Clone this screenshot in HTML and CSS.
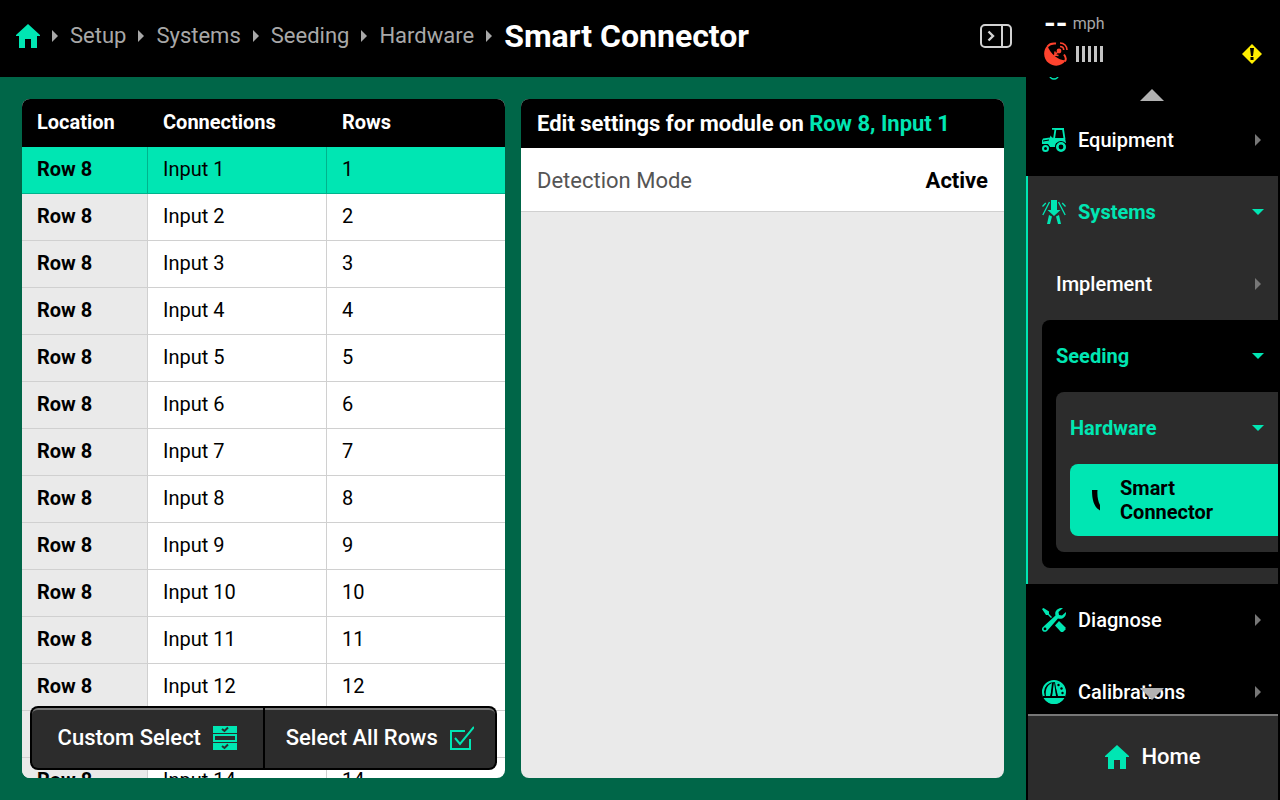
FILE: index.html
```html
<!DOCTYPE html>
<html lang="en">
<head>
<meta charset="utf-8">
<title>Smart Connector</title>
<link rel="stylesheet" href="styles.css">
</head>
<body>
<svg class="defs" aria-hidden="true">
  <symbol id="home" viewBox="0 0 24 24"><path d="M12 0 24 11v1h-3v12h-6v-9H9v9H3V12H0v-1z"/></symbol>
  <symbol id="right" viewBox="0 0 6 12"><path d="M0 0 6 6 0 12z"/></symbol>
  <symbol id="down" viewBox="0 0 12 6"><path d="M0 0h12L6 6z"/></symbol>
</svg>
<main class="main">
  <header class="topbar">
    <nav class="crumbs" aria-label="Breadcrumb">
      <a class="crumb-home" href="#" aria-label="Home"><svg class="icon"><use href="#home"/></svg></a>
      <svg class="sep"><use href="#right"/></svg>
      <a href="#">Setup</a>
      <svg class="sep"><use href="#right"/></svg>
      <a href="#">Systems</a>
      <svg class="sep"><use href="#right"/></svg>
      <a href="#">Seeding</a>
      <svg class="sep"><use href="#right"/></svg>
      <a href="#">Hardware</a>
      <svg class="sep"><use href="#right"/></svg>
      <h1>Smart Connector</h1>
    </nav>
    <button class="collapse" aria-label="Collapse sidebar">
      <svg width="32" height="24" viewBox="0 0 32 24" fill="none" stroke="currentColor" stroke-width="2"><rect x="1" y="1" width="30" height="22" rx="4"/><path d="M22 1v22"/><path stroke-width="2.400" d="M8.500 7.500 13 12l-4.500 4.500"/></svg>
    </button>
  </header>
  <div class="content">
    <section class="panel">
      <table class="modules">
        <thead><tr><th>Location</th><th>Connections</th><th>Rows</th></tr></thead>
        <tbody>
          <tr class="selected"><th>Row 8</th><td>Input 1</td><td>1</td></tr>
          <tr><th>Row 8</th><td>Input 2</td><td>2</td></tr>
          <tr><th>Row 8</th><td>Input 3</td><td>3</td></tr>
          <tr><th>Row 8</th><td>Input 4</td><td>4</td></tr>
          <tr><th>Row 8</th><td>Input 5</td><td>5</td></tr>
          <tr><th>Row 8</th><td>Input 6</td><td>6</td></tr>
          <tr><th>Row 8</th><td>Input 7</td><td>7</td></tr>
          <tr><th>Row 8</th><td>Input 8</td><td>8</td></tr>
          <tr><th>Row 8</th><td>Input 9</td><td>9</td></tr>
          <tr><th>Row 8</th><td>Input 10</td><td>10</td></tr>
          <tr><th>Row 8</th><td>Input 11</td><td>11</td></tr>
          <tr><th>Row 8</th><td>Input 12</td><td>12</td></tr>
          <tr><th>Row 8</th><td>Input 13</td><td>13</td></tr>
          <tr><th>Row 8</th><td>Input 14</td><td>14</td></tr>
        </tbody>
      </table>
      <div class="actions">
        <button>Custom Select
          <svg class="icon" viewBox="0 0 24 24"><path d="M0 0h24v7H0zM0 17h24v7H0z"/><path fill-rule="evenodd" d="M0 8h24v8H0zM2 10v4h20v-4z"/><path class="tick" d="m9 3 2.500 2L15 1.500M9 20l2.500 2 3.500-3.500"/></svg>
        </button>
        <button>Select All Rows
          <svg class="icon line" viewBox="0 0 24 24"><path d="M15 5H1v18h19V13"/><path d="m5 12 5 6L24 1"/></svg>
        </button>
      </div>
    </section>
    <section class="panel">
      <h2>Edit settings for module on <span>Row 8, Input 1</span></h2>
      <button class="setting">Detection Mode <strong>Active</strong></button>
    </section>
  </div>
</main>
<aside class="sidebar">
  <div class="status">
    <div class="speed"><b>--</b> mph</div>
    <div class="signals">
      <svg class="icon dish" viewBox="0 0 24 24"><path d="M3.500 3.500C-1.500 8.500-.8 17 5 21.300c5.500 4 13.500 2.700 16.500-2.800C14 18 6 12 3.500 3.500z"/><path class="arc" d="M3.500 4.500C5.500 1.800 9 1.200 12 1.600M20 12.500c2 2.500 2.500 4.500 1 7"/><path class="arm" d="M8 15.500 15 9M11 9.500v3.500l3.500.5"/><circle cx="15" cy="9" r="2.400"/><path class="arc thin" d="M16 4.500c2.200 0 3.700 1.500 3.700 3.500M16 1c4.200 0 7 3 7 7"/></svg>
      <svg class="bars" width="28" height="16" viewBox="0 0 28 16"><path d="M1.500 0v16M7.500 0v16M13.500 0v16M19.500 0v16M25.500 0v16"/></svg>
      <svg class="alert" width="20" height="20" viewBox="0 0 20 20"><path fill="#fe0" d="M10 0 20 10 10 20 0 10z"/><path d="M8 4h4l-1 8H9zM8.500 13h3v3h-3z"/></svg>
    </div>
  </div>
  <div class="nav-wrap">
    <svg class="scroll-hint up" viewBox="0 0 24 12"><path d="M0 12h24L12 0z"/></svg>
    <nav class="nav" aria-label="Main">
      <div class="item" aria-hidden="true"><svg class="icon" viewBox="0 0 24 24" fill="none" stroke="currentColor" stroke-width="1.500"><circle cx="12" cy="18.500" r="4.500"/></svg></div>
      <a class="item" href="#">
        <svg class="icon" viewBox="0 0 24 24"><path d="M0 12.500 1 10.500l7-1 .5-2 1.500 2 2 .5h11l1 5H14l-1 4H8l-2-3H0z"/><path class="cab" d="M12 11 13.500 1H21l1.500 10M10 .9h12"/><circle cx="3.500" cy="20.500" r="4.500" fill="#000"/><circle cx="19" cy="19" r="6" fill="#000"/><circle class="wheel" cx="3.500" cy="20.500" r="2.500"/><circle class="wheel big" cx="19" cy="19" r="3.700"/><path fill="#000" d="m1 12.500 6-1v1l-6 1z"/></svg>
        Equipment<svg class="chev"><use href="#right"/></svg></a>
      <div class="group">
        <a class="item open" href="#">
          <svg class="icon" viewBox="0 0 24 24"><path d="M9 0h6v10h3.500L12 16 5.500 10H9z"/><path d="m7 15 3 1.500L8 24H5zM17 15l-3 1.500 2 7.500h3z"/><path class="spray" d="M7.500 2 .8 15M3.800 3 .5 6.500M16.500 2l6.700 13M20.200 3l3.300 3.500"/></svg>
          Systems<svg class="chev"><use href="#down"/></svg></a>
        <a class="item sub" href="#">Implement<svg class="chev"><use href="#right"/></svg></a>
        <div class="nest">
          <a class="item open" href="#">Seeding<svg class="chev"><use href="#down"/></svg></a>
          <div class="nest gray">
            <a class="item open" href="#">Hardware<svg class="chev"><use href="#down"/></svg></a>
            <a class="item current" href="#"><svg class="icon" viewBox="0 0 24 24"><path d="M8 2h5.500c-.5 6 .5 11 2.500 15v5.500C10 19 8 12 8 2z"/></svg>Smart Connector</a>
          </div>
        </div>
      </div>
      <a class="item" href="#">
        <svg class="icon" viewBox="0 0 24 24"><path d="m0 1 1.500-1L7 3.500V6l3 3-1 1-3-3H4z"/><path d="m17 13 6.500 6.500v2L21 24h-2l-6-6.500z"/><path fill-rule="evenodd" d="M21 0c-4-.7-9 2.500-7.500 7.500L1 19c-3 3 1 6.500 4 4l11-12.500c4.500 1.500 8.500-2 8-6.500l-4 3.500-3-.5L16.500 4zM3 19.500a1.400 1.400 0 1 1 0 2.800 1.400 1.400 0 0 1 0-2.800z"/></svg>
        Diagnose<svg class="chev"><use href="#right"/></svg></a>
      <a class="item" href="#">
        <svg class="icon" viewBox="0 0 24 24"><circle cx="12" cy="12" r="11" fill="none" stroke="currentColor" stroke-width="2"/><path d="M4 16C3 10 5 5 10 3L8.500 16zM13 2c6 0 10 5 10 10l-.5 4H15z"/><path d="M12 2 10 16h4zM2 18h20c-4.500 8-15.500 8-20 0z"/><path fill="#000" d="M1 16h22v2H1zM11.300 2 8.300 16H10zM13 4l1.200 12h1.800z"/><g fill="#000"><circle cx="16.500" cy="5" r="1.200"/><circle cx="19.500" cy="8.500" r="1.200"/><circle cx="20.500" cy="13" r="1.200"/></g></svg>
        Calibrations<svg class="chev"><use href="#right"/></svg></a>
    </nav>
    <svg class="scroll-hint bottom" viewBox="0 0 24 12"><path d="M0 0h24L12 12z"/></svg>
  </div>
  <a class="home" href="#"><svg class="icon"><use href="#home"/></svg>Home</a>
</aside>
</body>
</html>
```

FILE: styles.css
```css
:root {
  --accent: #00e6b3;
  --dark: #2c2c2c;
  --green: #006648;
}
* { box-sizing: border-box; }
body {
  margin: 0;
  height: 100vh;
  display: grid;
  grid-template-columns: minmax(0, 1fr) 254px;
  overflow: hidden;
  background: #000;
  color: #fff;
  font: 400 20px/24px Roboto, sans-serif;
}
a { color: inherit; text-decoration: none; }
button { font: inherit; border: 0; margin: 0; cursor: pointer; }
svg { flex: none; fill: currentColor; }
svg[fill="none"] { fill: none; }
.defs { position: absolute; width: 0; height: 0; }
.icon { width: 24px; height: 24px; color: var(--accent); }

.main { display: flex; flex-direction: column; min-height: 0; background: var(--green); }
.topbar {
  flex: none;
  display: flex;
  align-items: center;
  justify-content: space-between;
  height: 77px;
  padding: 0 14px 6px 16px;
  background: #000;
}
.crumbs { display: flex; align-items: center; gap: 12px; color: #a8a8a8; font-size: 22px; }
.crumb-home { display: flex; }
.sep { width: 6px; height: 12px; }
h1 { margin: 0; color: #fff; font-size: 32px; line-height: 38px; font-weight: 700; }
.collapse { display: flex; padding: 0; background: none; color: #d2d2d2; }

.content {
  flex: 1;
  min-height: 0;
  display: grid;
  grid-template-columns: 1fr 1fr;
  gap: 16px;
  padding: 22px;
}
.panel {
  position: relative;
  min-height: 0;
  overflow: hidden;
  border-radius: 8px;
  background: #eaeaea;
  color: #000;
}
.modules { width: 100%; table-layout: fixed; border-spacing: 0; background: #fff; }
.modules th, .modules td {
  height: 47px;
  padding: 0 0 2px 15px;
  text-align: left;
  border-bottom: 1px solid #d0d0d0;
}
.modules th { font-weight: 700; }
.modules th:first-child { width: 126px; }
.modules th:nth-child(2) { width: 179px; }
.modules thead th { height: 48px; border: 0; background: #000; color: #fff; }
.modules tbody th { background: #eaeaea; }
.modules tbody th, .modules td:nth-child(2) { border-right: 1px solid #d0d0d0; }
.modules .selected th, .modules .selected td { background: var(--accent); border-color: #00b38c; }

.actions {
  position: absolute;
  left: 8px;
  right: 8px;
  bottom: 8px;
  display: grid;
  grid-template-columns: 1fr 1fr;
  gap: 2px;
  padding: 2px;
  border-radius: 8px;
  background: #000;
}
.actions button {
  display: flex;
  align-items: center;
  justify-content: center;
  gap: 12px;
  height: 60px;
  padding: 0 0 2px;
  border-top: 2px solid #777;
  background: var(--dark);
  color: #fff;
  font-size: 22px;
  font-weight: 500;
}
.actions button:first-child { border-radius: 6px 0 0 6px; }
.actions button:last-child { border-radius: 0 6px 6px 0; }
.tick { fill: none; stroke: var(--dark); stroke-width: 2; }
.line { fill: none; stroke: currentColor; stroke-width: 2; }

h2 {
  margin: 0;
  padding: 13px 16px 12px;
  background: #000;
  color: #fff;
  font-size: 22px;
  line-height: 24px;
  font-weight: 700;
}
h2 span { color: var(--accent); }
.setting {
  display: flex;
  align-items: center;
  justify-content: space-between;
  width: 100%;
  height: 64px;
  padding: 2px 16px 0;
  border-bottom: 1px solid #d0d0d0;
  background: #fff;
  color: #555;
  font-size: 22px;
}
.setting strong { color: #000; font-weight: 700; }

.sidebar { display: flex; flex-direction: column; min-height: 0; padding-right: 2px; }
.status { flex: none; height: 77px; padding: 12px 16px 0 18px; }
.speed { display: flex; gap: 5px; height: 24px; color: #a8a8a8; font-size: 16px; line-height: 24px; }
.speed b { color: #fff; font-size: 30px; line-height: 22px; }
.signals { display: flex; align-items: center; gap: 8px; height: 36px; }
.dish { color: #ff432e; }
.dish .arc { fill: none; stroke: currentColor; stroke-width: 2; }
.dish .arm { fill: none; stroke: currentColor; stroke-width: 1.6; }
.dish .thin { stroke-width: 1.6; }
.bars { stroke: #c4c4c4; stroke-width: 3; }
.alert { margin-left: auto; fill: #000; }

.nav-wrap { position: relative; flex: 1; min-height: 0; overflow: hidden; }
.nav { margin-top: -45px; }
.item {
  display: flex;
  align-items: center;
  gap: 12px;
  height: 72px;
  padding: 0 14px 0 16px;
  font-weight: 500;
}
.chev { width: 6px; height: 12px; margin: 0 3px 0 auto; color: #777; }
.group { background: var(--dark); border-left: 2px solid var(--accent); padding-bottom: 16px; }
.group .item { padding-left: 14px; }
.group .item.sub { padding-left: 28px; }
.item.open { color: var(--accent); font-weight: 700; }
.open .chev { width: 12px; height: 6px; margin-right: 0; color: var(--accent); }
.nest { margin-left: 14px; padding-bottom: 16px; border-radius: 8px 0 0 8px; background: #000; }
.nest.gray { background: var(--dark); }
.group .item.current {
  margin-left: 14px;
  padding: 0 40px 0 14px;
  border-radius: 8px 0 0 8px;
  background: var(--accent);
  color: #000;
  font-weight: 700;
}
.current .icon { color: #000; }
.spray { fill: none; stroke: currentColor; stroke-width: 1.3; }
.cab { fill: none; stroke: currentColor; stroke-width: 1.8; }
.wheel { fill: none; stroke: currentColor; stroke-width: 2; }
.wheel.big { stroke-width: 2.600; }
.scroll-hint { position: absolute; left: 114px; width: 24px; height: 12px; color: #b2b2b2; }
.up { top: 12px; }
.bottom { bottom: 14px; }
.home {
  flex: none;
  display: flex;
  align-items: center;
  justify-content: center;
  gap: 12px;
  height: 86px;
  margin-left: 2px;
  padding-bottom: 2px;
  border-top: 2px solid #777;
  background: var(--dark);
  font-size: 22px;
  font-weight: 500;
}
```
